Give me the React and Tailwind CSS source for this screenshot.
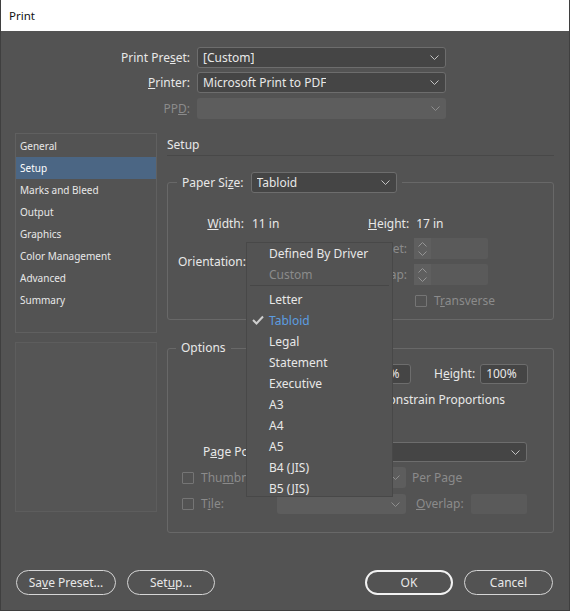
import React from 'react';

const Chevron = ({ color = '#c4c4c4' }) => (
  <svg width="9" height="5" viewBox="0 0 9 5" className="shrink-0">
    <polyline points="0.5,0.5 4.5,4.5 8.5,0.5" fill="none" stroke={color} strokeWidth="1" />
  </svg>
);

const Select = ({ value, className = '', disabled }) => (
  <div
    className={
      disabled
        ? `flex items-center justify-between bg-[#5d5d5d] rounded-[3px] pl-[6px] pr-[6px] ${className}`
        : `flex items-center justify-between bg-[#454545] border border-[#6d6d6d] rounded-[3px] pl-[5px] pr-[6px] ${className}`
    }
  >
    <span className="truncate">{value}</span>
    <Chevron color={disabled ? '#8e8e8e' : '#c4c4c4'} />
  </div>
);

const Spinner = () => (
  <div className="flex w-[74px] h-[21px] bg-[#5a5a5a] rounded-[2px]">
    <div className="w-[17px] h-full bg-[#5f5f5f] flex flex-col items-center justify-center gap-[4px]">
      <svg width="9" height="5" viewBox="0 0 9 5">
        <polyline points="0.5,4.5 4.5,0.5 8.5,4.5" fill="none" stroke="#959595" strokeWidth="1" />
      </svg>
      <svg width="9" height="5" viewBox="0 0 9 5">
        <polyline points="0.5,0.5 4.5,4.5 8.5,0.5" fill="none" stroke="#959595" strokeWidth="1" />
      </svg>
    </div>
  </div>
);

const Checkbox = ({ className = '' }) => (
  <div className={`w-[12px] h-[12px] border border-[#757575] rounded-[1px] shrink-0 ${className}`} />
);

const navItems = [
  'General',
  'Setup',
  'Marks and Bleed',
  'Output',
  'Graphics',
  'Color Management',
  'Advanced',
  'Summary',
];

const paperSizes = ['Letter', 'Tabloid', 'Legal', 'Statement', 'Executive', 'A3', 'A4', 'A5', 'B4 (JIS)', 'B5 (JIS)'];

export default function App() {
  return (
    <div className="relative w-[570px] h-[611px] bg-[#535353] font-['Noto_Sans',sans-serif] text-[12px] leading-[16px] text-[#e8e8e8] border-x border-b border-[#3f3f3f] flex flex-col overflow-hidden">
      {/* title bar */}
      <div className="h-[31px] shrink-0 bg-white flex items-center pl-[8px] text-[11.5px] text-[#111]">
        Print
      </div>

      {/* preset / printer / ppd */}
      <div className="mt-[16px] flex flex-col">
        <div className="flex items-center h-[21px]">
          <span className="w-[189px] text-right">
            Print Pre<u>s</u>et:
          </span>
          <Select value="[Custom]" className="ml-[7px] w-[249px] h-[21px]" />
        </div>
        <div className="flex items-center h-[21px] mt-[4px]">
          <span className="w-[189px] text-right">
            <u>P</u>rinter:
          </span>
          <Select value="Microsoft Print to PDF" className="ml-[7px] w-[249px] h-[21px]" />
        </div>
        <div className="flex items-center h-[21px] mt-[5px]">
          <span className="w-[189px] text-right text-[#8b8b8b]">
            PP<u>D</u>:
          </span>
          <Select value="" disabled className="ml-[7px] w-[249px] h-[21px]" />
        </div>
      </div>

      {/* main */}
      <div className="mt-[14px] flex pl-[14px] gap-[10px]">
        {/* left nav */}
        <div className="w-[142px] shrink-0 flex flex-col">
          <div className="h-[200px] border border-[#606060] pt-[1px]">
            {navItems.map((item) => (
              <div
                key={item}
                className={
                  item === 'Setup'
                    ? 'h-[22px] pl-[4px] flex items-center text-[10px] bg-[#4b6684] text-white'
                    : 'h-[22px] pl-[4px] flex items-center text-[10px]'
                }
              >
                {item}
              </div>
            ))}
          </div>
          <div className="mt-[9px] h-[170px] border border-[#5d5d5d] bg-[#555555]" />
        </div>

        {/* right content */}
        <div className="w-[387px] shrink-0 flex flex-col">
          <div className="h-[23px] pt-[2px] flex items-center border-b border-[#484848] text-[12px]">Setup</div>

          {/* paper size group */}
          <fieldset className="mt-[16px] border border-[#686868] rounded-[3px] pb-[12px]">
            <legend className="ml-[9px] px-[5px] flex items-center">
              <span>
                Paper Si<u>z</u>e:
              </span>
              <Select value="Tabloid" className="ml-[7px] w-[146px] h-[21px]" />
            </legend>
            <div className="flex items-center h-[16px] mt-[23px]">
              <span className="w-[76px] text-right">
                <u>W</u>idth:
              </span>
              <span className="ml-[8px] w-[116px]">11 in</span>
              <span>
                <u>H</u>eight:
              </span>
              <span className="ml-[7px]">17 in</span>
            </div>
            <div className="flex mt-[6px]">
              <div className="w-[180px] pl-[10px] pt-[16px]">Orientation:</div>
              <div className="w-[59px] flex flex-col items-end gap-[5px] text-[#8b8b8b]">
                <div className="h-[21px] flex items-center">Offset:</div>
                <div className="h-[21px] flex items-center">Gap:</div>
              </div>
              <div className="ml-[7px] flex flex-col">
                <Spinner />
                <div className="mt-[5px]">
                  <Spinner />
                </div>
                <div className="mt-[10px] flex items-center h-[12px]">
                  <Checkbox className="ml-[1px]" />
                  <span className="ml-[7px] text-[#8b8b8b]">
                    T<u>r</u>ansverse
                  </span>
                </div>
              </div>
            </div>
          </fieldset>

          {/* options group */}
          <fieldset className="mt-[20px] border border-[#686868] rounded-[3px] pb-[18px]">
            <legend className="ml-[8px] px-[5px]">Options</legend>
            <div className="flex items-center h-[20px] mt-[8px]">
              <div className="ml-[195px] w-[48px] h-[20px] bg-[#454545] border border-[#6d6d6d] rounded-[3px] pl-[5px] flex items-center">
                100%
              </div>
              <span className="ml-[23px]">
                H<u>e</u>ight:
              </span>
              <div className="ml-[5px] w-[48px] h-[20px] bg-[#454545] border border-[#6d6d6d] rounded-[3px] pl-[5px] flex items-center">
                100%
              </div>
            </div>
            <div className="flex items-center h-[16px] mt-[8px]">
              <Checkbox className="ml-[196px]" />
              <span className="ml-[5px]">Constrain Proportions</span>
            </div>
            <div className="flex items-center h-[20px] mt-[34px]">
              <span className="ml-[35px] w-[84px] shrink-0">
                P<u>a</u>ge Position:
              </span>
              <Select value="" className="ml-[2px] w-[238px] h-[20px]" />
            </div>
            <div className="flex items-center h-[21px] mt-[5px] text-[#8b8b8b]">
              <Checkbox className="ml-[14px]" />
              <span className="ml-[7px] w-[76px]">
                Thu<u>m</u>bnails:
              </span>
              <Select value="" disabled className="w-[129px] h-[21px]" />
              <span className="ml-[6px]">Per Page</span>
            </div>
            <div className="flex items-center h-[20px] mt-[6px] text-[#8b8b8b]">
              <Checkbox className="ml-[14px]" />
              <span className="ml-[7px] w-[76px]">
                T<u>i</u>le:
              </span>
              <Select value="" disabled className="w-[129px] h-[20px]" />
              <span className="ml-[10px]">
                <u>O</u>verlap:
              </span>
              <div className="ml-[7px] w-[56px] h-[20px] bg-[#5a5a5a] rounded-[2px]" />
            </div>
          </fieldset>
        </div>
      </div>

      {/* buttons */}
      <div className="mt-auto mb-[15px] flex items-center">
        <button className="ml-[15px] w-[100px] h-[25px] rounded-full border border-[#d6d6d6] text-[12px]">
          Sa<u>v</u>e Preset...
        </button>
        <button className="ml-[11px] w-[88px] h-[25px] rounded-full border border-[#d6d6d6] text-[12px]">
          Set<u>u</u>p...
        </button>
        <button className="ml-auto w-[88px] h-[25px] rounded-full border-2 border-[#f2f2f2] text-[12px]">
          OK
        </button>
        <button className="ml-[11px] mr-[16px] w-[89px] h-[25px] rounded-full border border-[#d6d6d6] text-[12px]">
          Cancel
        </button>
      </div>

      {/* paper size dropdown menu */}
      <div className="absolute left-[245px] top-[242px] w-[147px] h-[255px] bg-[#535353] border border-[#484848]">
        <div className="h-[21px] pl-[22px] flex items-center">Defined By Driver</div>
        <div className="h-[21px] pl-[22px] flex items-center text-[#8b8b8b]">Custom</div>
        <div className="mx-[3px] h-[4px] border-t border-[#474747]" />
        {paperSizes.map((size) => (
          <div
            key={size}
            className={
              size === 'Tabloid'
                ? 'relative h-[21px] pl-[22px] flex items-center text-[#5c9de0]'
                : 'h-[21px] pl-[22px] flex items-center'
            }
          >
            {size === 'Tabloid' && (
              <svg width="12" height="10" viewBox="0 0 12 10" className="absolute left-[5px] top-[5px]">
                <polyline points="1,5 4.5,8.5 11,1.5" fill="none" stroke="#cfcfcf" strokeWidth="2" />
              </svg>
            )}
            {size}
          </div>
        ))}
      </div>
    </div>
  );
}
